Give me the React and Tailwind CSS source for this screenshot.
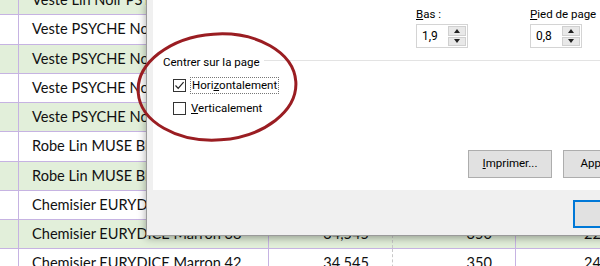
import React from "react";

const rows = [
  { name: "Veste Lin Noir PSYCHE 44", green: true },
  { name: "Veste PSYCHE Noir 36", green: false },
  { name: "Veste PSYCHE Noir 38", green: true },
  { name: "Veste PSYCHE Noir 40", green: false },
  { name: "Veste PSYCHE Noir 42", green: true },
  { name: "Robe Lin MUSE Blanc 36", green: false },
  { name: "Robe Lin MUSE Blanc 38", green: true },
  { name: "Chemisier EURYDICE Marron 36", green: false, a: "34,545", b: "350", c: "22" },
  { name: "Chemisier EURYDICE Marron 38", green: true, a: "34,545", b: "350", c: "22" },
  { name: "Chemisier EURYDICE Marron 42", green: false, a: "34,545", b: "350", c: "24" },
];

function Sheet() {
  return (
    <div className="-mt-[14px] font-['Lato',sans-serif] text-[14.6px] text-[#111]">
      {rows.map((r, i) => (
        <div
          key={i}
          className={`flex h-[29.25px] border-b border-[#c6b3e2] ${r.green ? "bg-[#e2efda]" : "bg-white"}`}
        >
          <div className="w-[19px] shrink-0 border-r border-[#c6b3e2]" />
          <div className="w-[250px] shrink-0 border-r border-[#c6b3e2] pl-[13px] flex items-center whitespace-nowrap overflow-hidden">
            {r.name}
          </div>
          <div className="w-[124px] shrink-0 border-r border-dashed border-[#c8c8c8] pr-[23px] flex items-center justify-end">
            {r.a}
          </div>
          <div className="w-[123px] shrink-0 border-r border-[#c6b3e2] pr-[23px] flex items-center justify-end">
            {r.b}
          </div>
          <div className="w-[120px] shrink-0 pl-[68px] flex items-center">{r.c}</div>
        </div>
      ))}
    </div>
  );
}

function Spin({ value }) {
  return (
    <div className="flex h-[24px] w-[52px] border border-[#d4d4d4] bg-white">
      <div className="flex-1 pl-[5px] flex items-center text-[12px]">{value}</div>
      <div className="w-[18px] my-[1px] mr-[1px] flex flex-col gap-[1px]">
        <div className="flex-1 bg-[#e8e8e8] border border-[#d0d0d0] flex items-center justify-center">
          <svg width="6" height="4" viewBox="0 0 6 4"><path d="M0 4 L3 0 L6 4 Z" fill="#222" /></svg>
        </div>
        <div className="flex-1 bg-[#e8e8e8] border border-[#d0d0d0] flex items-center justify-center">
          <svg width="6" height="4" viewBox="0 0 6 4"><path d="M0 0 L3 4 L6 0 Z" fill="#222" /></svg>
        </div>
      </div>
    </div>
  );
}

function Check({ checked }) {
  return (
    <div className="w-[13px] h-[13px] border border-[#333] bg-white flex items-center justify-center">
      {checked && (
        <svg width="11" height="11" viewBox="0 0 11 11">
          <path d="M1.5 5.5 L4.2 8.3 L9.6 2.2" fill="none" stroke="#222" strokeWidth="1.2" />
        </svg>
      )}
    </div>
  );
}

function Dialog() {
  return (
    <div className="absolute left-[146px] top-0 w-[520px] h-[236px] bg-[#f0f0f0] border-l border-b border-[#9a9a9a] shadow-[0_2px_8px_rgba(0,0,0,0.35)] pl-[6px] font-['Roboto',sans-serif] text-[11.5px] text-black">
      <div className="h-[190px] bg-white flex flex-col">
        <div className="flex gap-[62px] pl-[263px] pt-[6px]">
          <div className="flex flex-col gap-[2px]">
            <div className="h-[16px] leading-[16px]">
              <span className="underline">B</span>as :
            </div>
            <Spin value="1,9" />
          </div>
          <div className="flex flex-col gap-[2px]">
            <div className="h-[16px] leading-[16px] whitespace-nowrap">
              <span className="underline">P</span>ied de page
            </div>
            <Spin value="0,8" />
          </div>
        </div>
        <div className="flex items-center pl-[10px] mt-[6px] h-[16px]">
          <span className="whitespace-nowrap leading-[16px]">Centrer sur la page</span>
          <div className="flex-1 h-px bg-[#e3e3e3] ml-[4px] -mt-[3px]" />
        </div>
        <div className="flex items-center pl-[20px] mt-[7px] gap-[4px]">
          <Check checked />
          <span className="border border-dotted border-[#777] px-[1px] h-[17px] leading-[15px]">
            Hori<span className="underline">z</span>ontalement
          </span>
        </div>
        <div className="flex items-center pl-[20px] mt-[7px] gap-[5px]">
          <Check />
          <span className="leading-[15px]">
            <span className="underline">V</span>erticalement
          </span>
        </div>
        <div className="flex gap-[11px] pl-[315px] mt-[34px]">
          <div className="w-[84px] h-[28px] bg-[#e1e1e1] border border-[#adadad] flex items-center justify-center">
            <span><span className="underline">I</span>mprimer...</span>
          </div>
          <div className="w-[84px] h-[28px] bg-[#e1e1e1] border border-[#adadad] flex items-center justify-center">
            Appliquer
          </div>
        </div>
      </div>
      <div className="pl-[420px] pt-[10px]">
        <div className="w-[80px] h-[28px] bg-[#e1e1e1] border-2 border-[#0078d7]" />
      </div>
    </div>
  );
}

export default function App() {
  return (
    <div className="relative w-[600px] h-[266px] overflow-hidden bg-white">
      <Sheet />
      <Dialog />
      <svg className="absolute inset-0 pointer-events-none" width="600" height="266">
        <ellipse cx="217" cy="87" rx="79" ry="53" transform="rotate(-4 217 87)" fill="none" stroke="#9a1d22" strokeWidth="3" />
      </svg>
    </div>
  );
}
